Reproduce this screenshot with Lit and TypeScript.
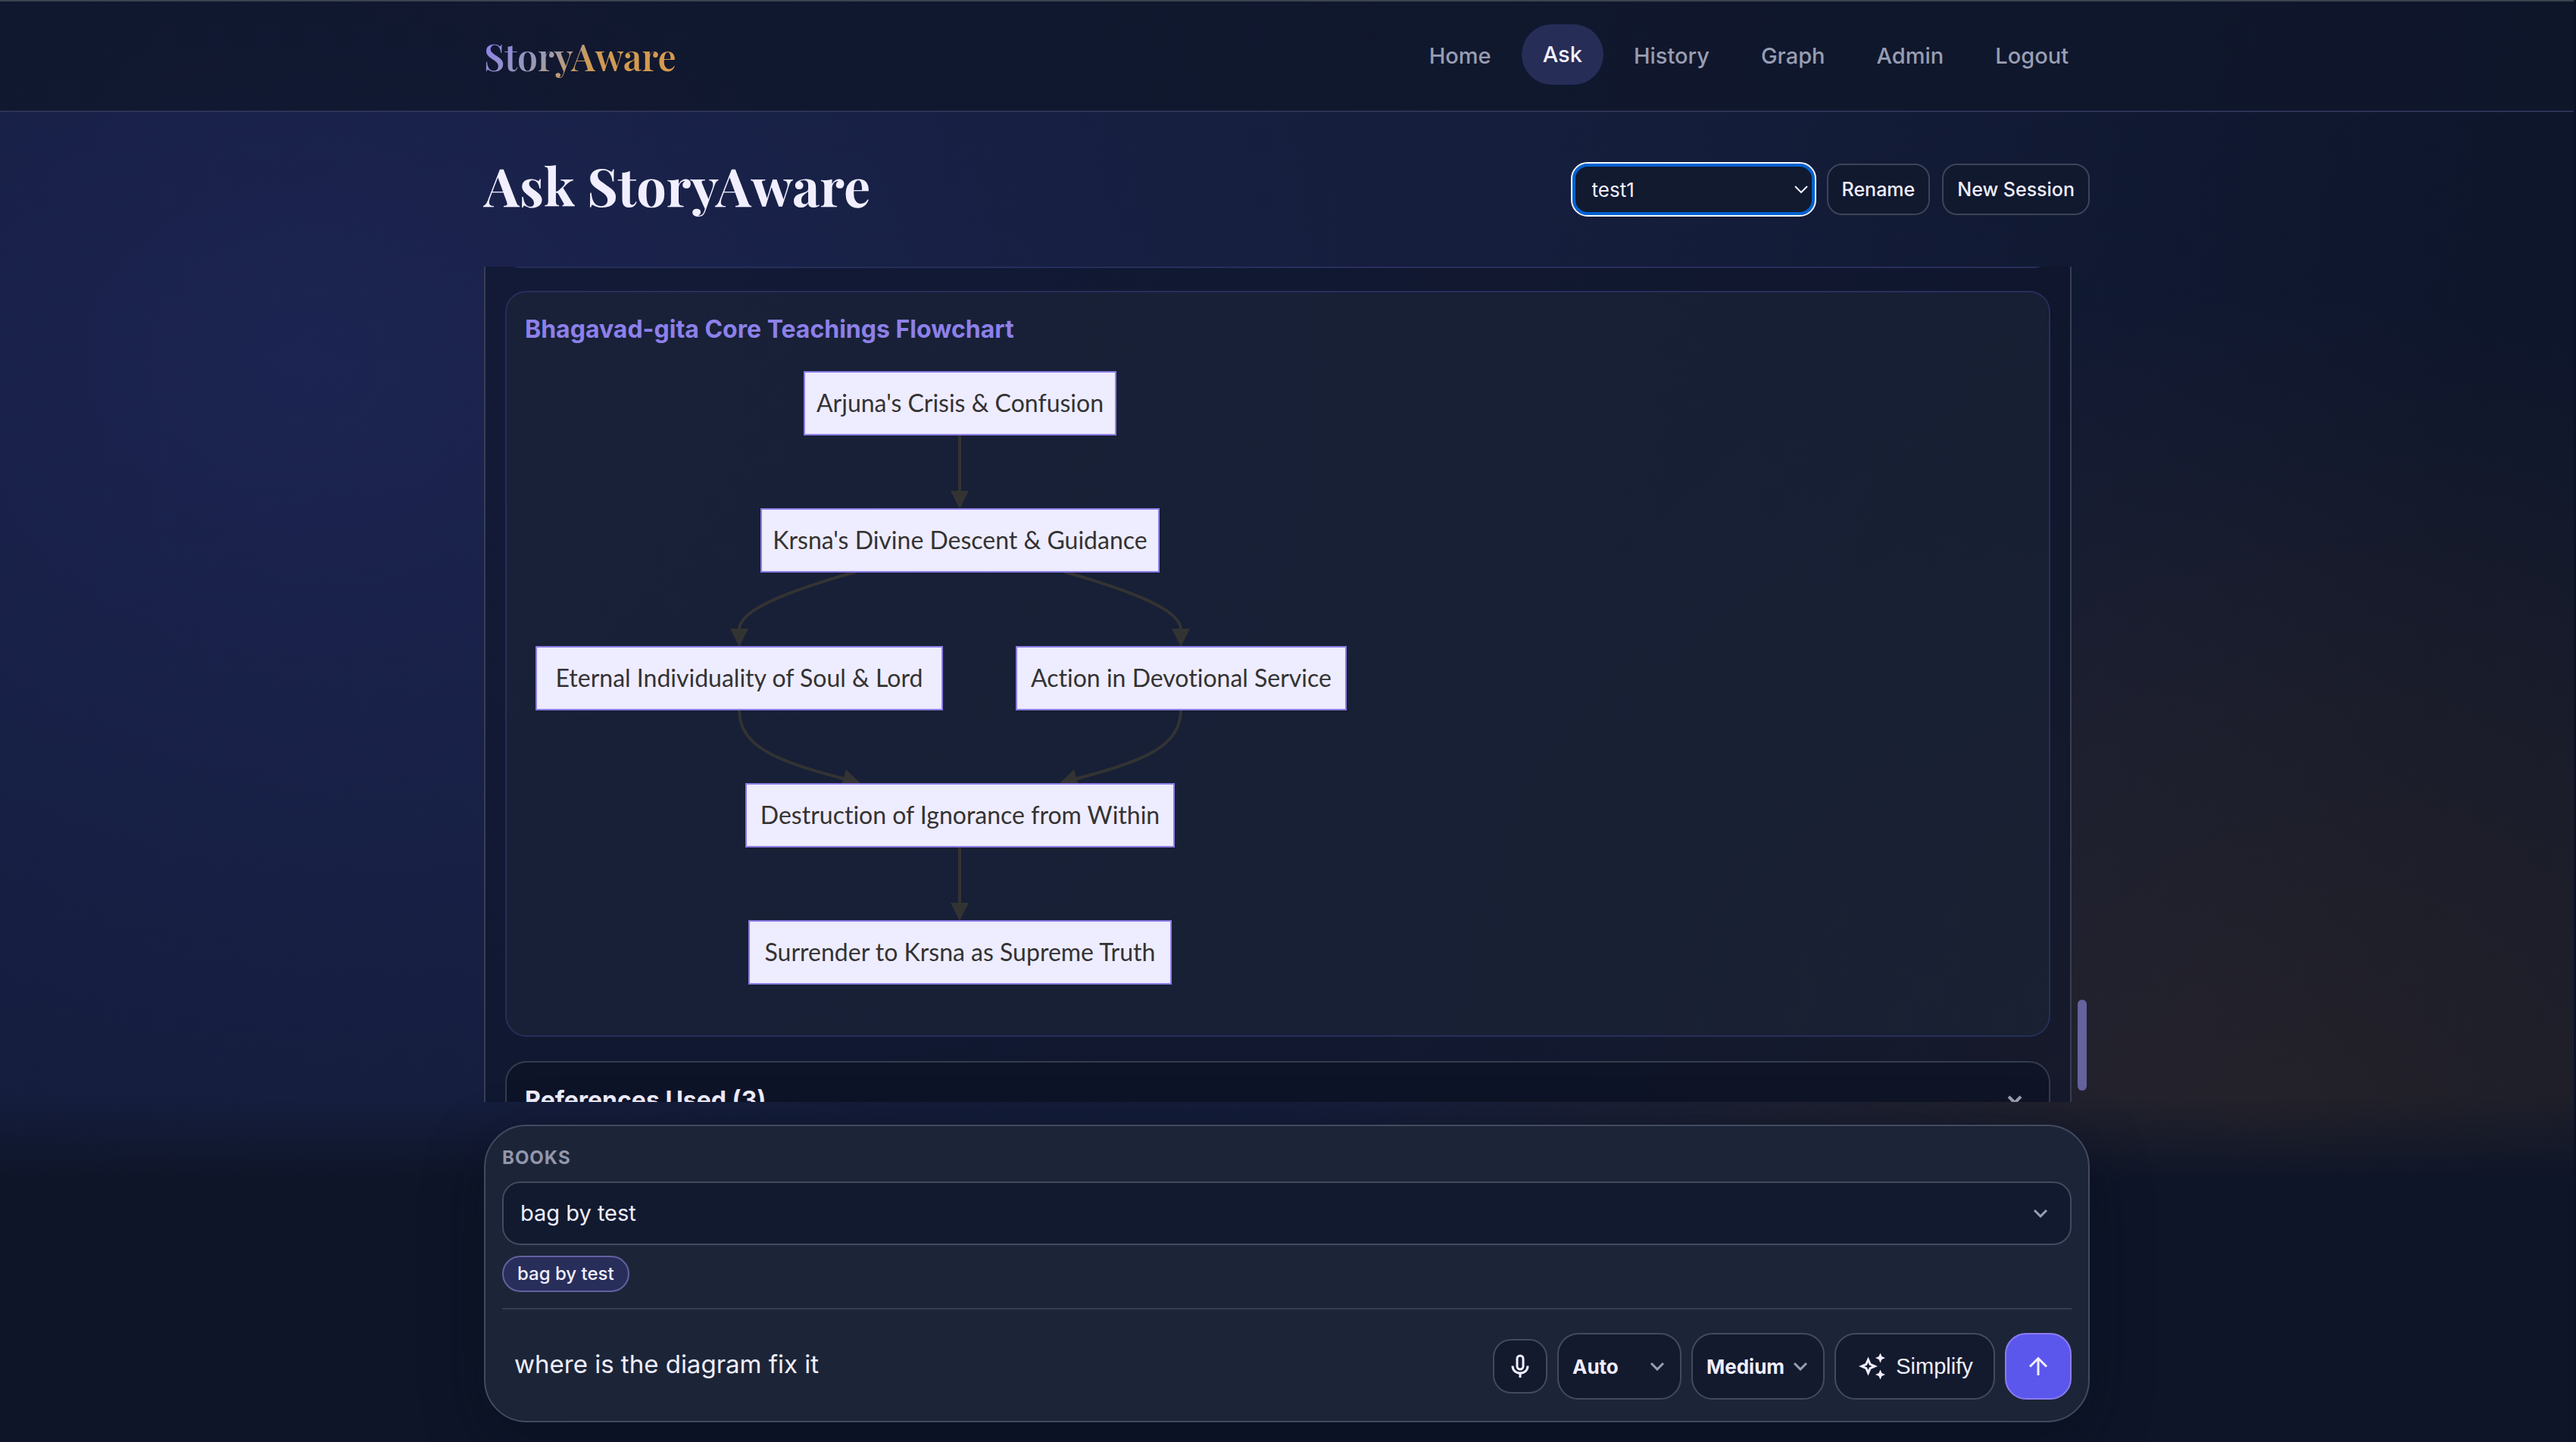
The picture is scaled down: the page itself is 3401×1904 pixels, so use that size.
import { LitElement, html, css, svg } from "lit";
import { customElement } from "lit/decorators.js";

interface FlowNode {
  label: string;
  x: number;
  y: number;
  width: number;
}

const NODE_HEIGHT = 83;

const NODES: FlowNode[] = [
  { label: "Arjuna's Crisis & Confusion", x: 369, y: 16, width: 411 },
  { label: "Krsna's Divine Descent & Guidance", x: 312, y: 197, width: 525 },
  { label: "Eternal Individuality of Soul & Lord", x: 15, y: 379, width: 536 },
  { label: "Action in Devotional Service", x: 649, y: 379, width: 435 },
  { label: "Destruction of Ignorance from Within", x: 292, y: 560, width: 565 },
  { label: "Surrender to Krsna as Supreme Truth", x: 296, y: 741, width: 557 },
];

const EDGES: string[] = [
  "M574 99V176",
  "M437 280C345 306 283 331 283 356",
  "M712 280C804 306 866 331 866 356",
  "M283 462C283 510 330 530 424 554",
  "M866 462C866 510 819 530 725 554",
  "M574 643V720",
];

const ARROWS: string[] = [
  "M562 173h24l-12 24z",
  "M271 355h24l-12 24z",
  "M854 355h24l-12 24z",
  "M424 541L417 565L444 560z",
  "M725 541L732 565L705 560z",
  "M562 717h24l-12 24z",
];

@customElement("flow-chart")
export class FlowChart extends LitElement {
  static styles = css`
    :host {
      display: block;
    }
    .chart {
      display: block;
      width: 1100px;
      max-width: 100%;
    }
    .node {
      fill: #eeecff;
      stroke: #8c7ee6;
      stroke-width: 2;
    }
    .edge {
      fill: none;
      stroke: #333333;
      stroke-width: 4;
    }
    .arrow {
      fill: #333333;
    }
    .label {
      font: 400 32px "Trebuchet MS", Lato, sans-serif;
      font-variant-ligatures: none;
      fill: #333333;
      text-anchor: middle;
    }
  `;

  render() {
    return html`
      <svg class="chart" viewBox="0 0 1100 840" role="img" aria-label="Bhagavad-gita Core Teachings Flowchart">
        ${EDGES.map((d) => svg`<path class="edge" d=${d}></path>`)}
        ${ARROWS.map((d) => svg`<path class="arrow" d=${d}></path>`)}
        ${NODES.map(
          (n) => svg`
            <rect class="node" x=${n.x} y=${n.y} width=${n.width} height=${NODE_HEIGHT}></rect>
            <text class="label" x=${n.x + n.width / 2} y=${n.y + 53}>${n.label}</text>`
        )}
      </svg>
    `;
  }
}

const chevron = (cls: string) => html`
  <svg class="chevron ${cls}" viewBox="0 0 20 12" aria-hidden="true"><path d="M2 2l8 8 8-8" /></svg>
`;

const LINKS = ["Home", "Ask", "History", "Graph", "Admin", "Logout"];

@customElement("app-root")
export class AppRoot extends LitElement {
  static styles = css`
    :host {
      display: flex;
      flex-direction: column;
      height: 100vh;
      overflow: hidden;
      box-sizing: border-box;
      border-right: 3px solid #0d1326;
      font-family: Inter, "Liberation Sans", sans-serif;
      color: #f0eeff;
      background:
        linear-gradient(to bottom, transparent 76%, #0e1528 82%),
        radial-gradient(ellipse 1500px 1200px at 12% 25%, rgba(50, 56, 140, 0.28), transparent),
        radial-gradient(
          ellipse 1300px 1100px at 88% 78%,
          rgba(180, 110, 20, 0.13),
          rgba(180, 110, 20, 0.08) 50%,
          transparent
        ),
        linear-gradient(100deg, #131c3a 0%, #151e3c 55%, #0e162c 90%);
    }
    * {
      box-sizing: border-box;
    }
    .topbar {
      flex: none;
      height: 148px;
      border-top: 2px solid #3b434f;
      border-bottom: 2px solid #2c3356;
      background: rgba(15, 23, 42, 0.8);
    }
    .wrap {
      width: 100%;
      max-width: 2120px;
      margin: 0 auto;
    }
    .bar {
      display: flex;
      align-items: center;
      justify-content: space-between;
      height: 100%;
    }
    .logo {
      font: 600 48px/64px "Playfair Display", "Liberation Serif", serif;
      text-decoration: none;
      color: transparent;
      background: linear-gradient(135deg, #8b7cf6 0%, #9a9cb4 35%, #cf9a55 55%, #d89a4c 100%);
      background-clip: text;
      -webkit-background-clip: text;
    }
    .nav {
      display: flex;
      align-items: center;
      gap: 12px;
    }
    .link {
      padding: 0 28px;
      border-radius: 40px;
      font-size: 29px;
      font-weight: 500;
      line-height: 80px;
      color: #989db2;
      text-decoration: none;
    }
    .link.active {
      margin-bottom: 4px;
      color: #f3f1ff;
      background: #262d57;
    }
    .page {
      flex: 1;
      min-height: 0;
      display: flex;
      flex-direction: column;
      padding: 0 0 26px;
    }
    .head {
      flex: none;
      display: flex;
      align-items: center;
      justify-content: space-between;
      height: 204px;
    }
    .title {
      margin: 0;
      padding-bottom: 12px;
      font: 700 70px/96px "Playfair Display", "Liberation Serif", serif;
      color: #f1efff;
    }
    .session {
      display: flex;
      gap: 16px;
    }
    button,
    select,
    input {
      font-family: inherit;
      color: inherit;
      margin: 0;
    }
    .picker {
      position: relative;
      display: flex;
    }
    select {
      appearance: none;
      width: 100%;
      border: 2px solid #424a60;
      background: #121a30;
      outline: none;
      text-overflow: ellipsis;
    }
    .chevron {
      position: absolute;
      top: 50%;
      width: 20px;
      height: 12px;
      margin-top: -6px;
      fill: none;
      stroke: #9a9fb4;
      stroke-width: 4;
      pointer-events: none;
    }
    .chevron.thin {
      right: 8px;
      stroke: #f1efff;
      stroke-width: 2;
    }
    .chevron.wide {
      right: 31px;
      stroke-width: 3;
    }
    .chevron.inset {
      right: 22px;
      stroke-width: 3;
    }
    .chevron.bold {
      position: static;
      margin: 0;
      width: 22px;
      stroke-width: 4;
    }
    .session .picker {
      width: 320px;
    }
    .session select {
      height: 68px;
      padding: 0 22px;
      font-size: 26px;
      border: 4px solid #0062d1;
      border-radius: 20px;
      outline: 2px solid #f4f6ff;
    }
    .plain {
      height: 68px;
      padding: 0 18px;
      border: 2px solid #3c4459;
      border-radius: 20px;
      font-size: 25px;
      font-weight: 500;
      background: #11192f;
    }
    .feed {
      flex: 1;
      min-height: 0;
      display: flex;
      gap: 8px;
      overflow: hidden;
      margin-bottom: 30px;
    }
    .bubble {
      flex: 1;
      align-self: flex-start;
      margin-top: -40px;
      padding: 0 26px 26px;
      border: 2px solid #363f54;
      border-top: 0;
      background: rgba(14, 21, 42, 0.62);
    }
    .card {
      border: 2px solid #272e5a;
      border-radius: 28px;
      background: rgba(30, 39, 58, 0.5);
    }
    .earlier {
      height: 42px;
      margin-bottom: 30px;
    }
    .diagram {
      padding: 24px 24px 52px;
    }
    .subtitle {
      margin: 0 0 15px;
      font-size: 32px;
      font-weight: 700;
      line-height: 50px;
      color: #8d80ea;
    }
    .refs {
      display: flex;
      align-items: center;
      justify-content: space-between;
      width: 100%;
      height: 102px;
      margin-top: 32px;
      padding: 0 34px 0 24px;
      border: 2px solid #333c4e;
      border-radius: 28px;
      background: rgba(13, 19, 38, 0.75);
      font-size: 32px;
      font-weight: 700;
    }
    .track {
      flex: none;
      width: 16px;
      display: flex;
      align-items: flex-end;
      padding-bottom: 15px;
    }
    .thumb {
      width: 12px;
      height: 120px;
      border-radius: 6px;
      background: #64639d;
    }
    .composer {
      flex: none;
      display: flex;
      flex-direction: column;
      padding: 22px 22px 28px;
      border: 2px solid #424a60;
      border-radius: 56px;
      background: #1c2537;
      box-shadow: 0 24px 80px rgba(8, 12, 28, 0.4);
    }
    .label {
      font-size: 24px;
      font-weight: 700;
      line-height: 40px;
      letter-spacing: 1px;
      color: #9297ae;
      margin-bottom: 11px;
    }
    .books select {
      height: 84px;
      padding: 0 22px 2px;
      border-radius: 24px;
      font-size: 29px;
    }
    .chips {
      display: flex;
      margin: 14px 0 21px;
    }
    .chip {
      padding: 0 18px;
      border: 2px solid #6361a0;
      border-radius: 24px;
      background: #282e5a;
      font-size: 24px;
      font-weight: 500;
      line-height: 44px;
    }
    .ask {
      display: flex;
      align-items: center;
      gap: 13px;
      padding-top: 31px;
      border-top: 2px solid #353e4e;
    }
    .prompt {
      flex: 1;
      min-width: 0;
      height: 80px;
      padding: 0 16px 6px;
      border: 0;
      outline: none;
      background: none;
      font-size: 33px;
    }
    .tool {
      height: 88px;
      border: 2px solid #424a60;
      border-radius: 28px;
      background: #131a2e;
    }
    .ask select {
      height: 88px;
      border-radius: 28px;
      padding: 0 18px;
      font-size: 26px;
      font-weight: 700;
      background: #131a2e;
    }
    .mode {
      width: 164px;
    }
    .level {
      width: 176px;
    }
    .mic {
      display: grid;
      place-items: center;
      width: 72px;
      height: 72px;
      padding: 0;
      border-radius: 24px;
    }
    .simplify {
      display: flex;
      align-items: center;
      justify-content: center;
      gap: 12px;
      width: 212px;
      padding: 0;
      font: 400 29px "Liberation Sans", Arial, sans-serif;
    }
    .send {
      display: grid;
      place-items: center;
      width: 88px;
      padding: 0;
      border-color: #8b7cf0;
      background: #5b57ec;
    }
    .icon {
      display: block;
      width: 40px;
      height: 40px;
      fill: currentColor;
    }
    .line {
      fill: none;
      stroke: currentColor;
      stroke-width: 3;
    }
  `;

  render() {
    return html`
      <header class="topbar">
        <div class="wrap bar">
          <a class="logo" href="#">StoryAware</a>
          <nav class="nav">
            ${LINKS.map(
              (name) => html`<a class="link ${name === "Ask" ? "active" : ""}" href="#">${name}</a>`
            )}
          </nav>
        </div>
      </header>
      <main class="page wrap">
        <div class="head">
          <h1 class="title">Ask StoryAware</h1>
          <div class="session">
            <div class="picker">
              <select aria-label="Session"><option>test1</option></select>
              ${chevron("thin")}
            </div>
            <button class="plain" type="button">Rename</button>
            <button class="plain" type="button">New Session</button>
          </div>
        </div>

        <section class="feed">
          <article class="bubble">
            <div class="card earlier"></div>
            <div class="card diagram">
              <h2 class="subtitle">Bhagavad-gita Core Teachings Flowchart</h2>
              <flow-chart></flow-chart>
            </div>
            <button class="refs" type="button" aria-expanded="false">
              References Used (3) ${chevron("bold")}
            </button>
          </article>
          <div class="track"><div class="thumb"></div></div>
        </section>

        <form class="composer">
          <label class="label" for="books">BOOKS</label>
          <div class="picker books">
            <select id="books"><option>bag by test</option></select>
            ${chevron("wide")}
          </div>
          <div class="chips"><span class="chip">bag by test</span></div>
          <div class="ask">
            <input class="prompt" type="text" aria-label="Question" value="where is the diagram fix it" />
            <button class="tool mic" type="button" aria-label="Dictate">
              <svg class="icon" viewBox="0 0 40 40">
                <rect class="line" x="16" y="6" width="8" height="18" rx="4"></rect>
                <path class="line" d="M10 19.500c0 5.500 4 9.500 10 9.500s10-4 10-9.500M20 29v6"></path>
              </svg>
            </button>
            <div class="picker mode">
              <select aria-label="Mode"><option>Auto</option></select>
              ${chevron("inset")}
            </div>
            <div class="picker level">
              <select aria-label="Level"><option>Medium</option></select>
              ${chevron("inset")}
            </div>
            <button class="tool simplify" type="button">
              <svg class="icon" viewBox="0 0 40 40">
                <path
                  fill-rule="evenodd"
                  d="M15.500 7.500l3.800 8.700 8.700 3.800-8.700 3.800-3.800 8.700-3.800-8.700L3 20l8.700-3.800zM15.500 15l-1.500 3.500-3.500 1.500 3.500 1.500 1.500 3.500 1.500-3.500 3.500-1.500-3.500-1.500z"
                ></path>
                <path d="M31.500 2.500l2 4.500 4.500 2-4.500 2-2 4.500-2-4.500-4.500-2 4.500-2zM31.500 24.500l2 4.500 4.500 2-4.500 2-2 4.500-2-4.500-4.500-2 4.500-2z"></path>
              </svg>
              Simplify
            </button>
            <button class="tool send" type="submit" aria-label="Send">
              <svg class="icon" viewBox="0 0 40 40">
                <path class="line" d="M20 32V9M9 20.500L20 9.500l11 11"></path>
              </svg>
            </button>
          </div>
        </form>
      </main>
    `;
  }
}
